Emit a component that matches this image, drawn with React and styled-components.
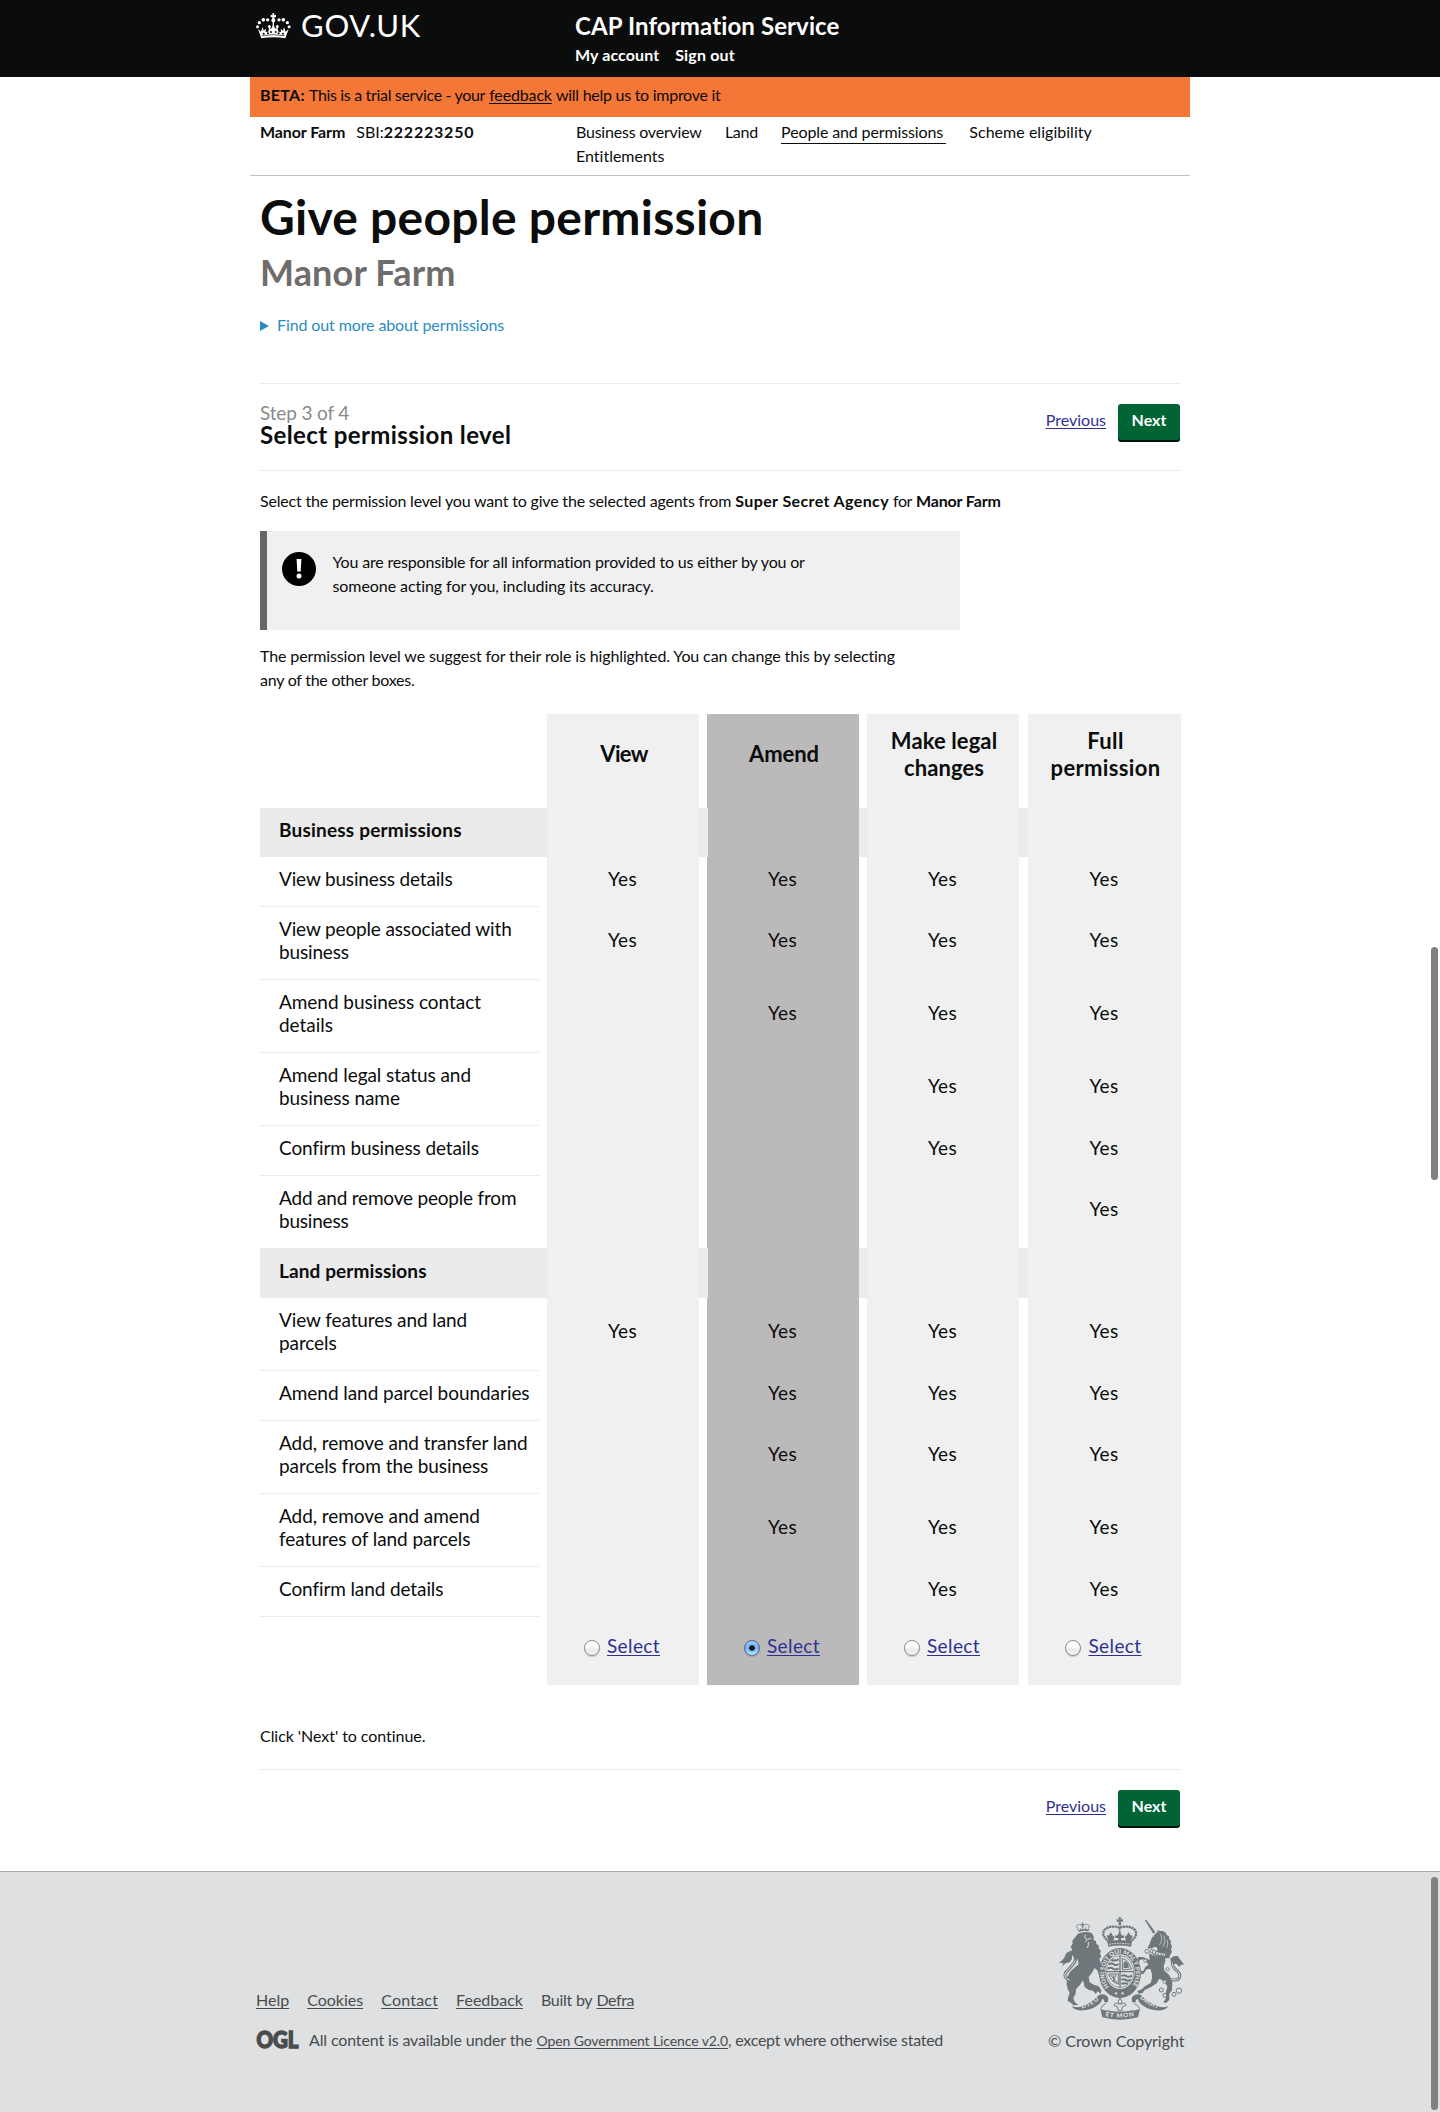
import React from 'react';
import styled, { createGlobalStyle, css } from 'styled-components';

const GlobalStyle = createGlobalStyle`
  * { box-sizing: border-box; }
  body {
    margin: 0;
    background: #fff;
    color: #0b0c0c;
    font: 400 16px/24px Lato, "Liberation Sans", sans-serif;
    font-variant-ligatures: none;
  }
  h1, h2, h3, p { margin: 0; padding: 0; }
`;

/* Inline run of text with its own tracking */
const T = styled.span`
  letter-spacing: ${(p) => p.$ls || 0}px;
  font-weight: ${(p) => (p.$bold ? 700 : 'inherit')};
  white-space: nowrap;
`;
const TextLink = styled.a`
  letter-spacing: ${(p) => p.$ls || 0}px;
  color: ${(p) => p.$color || 'inherit'};
  font-size: ${(p) => p.$size || 'inherit'};
  text-decoration: underline;
  text-decoration-thickness: 1px;
  text-underline-offset: 1.5px;
  text-decoration-skip-ink: none;
  white-space: nowrap;
`;

const Page = styled.div`
  position: relative;
  min-height: 2112px;
  overflow: hidden;
`;
const ScrollThumb = styled.div`
  position: absolute;
  right: 2px;
  top: ${(p) => p.$top}px;
  width: 7px;
  height: ${(p) => p.$height}px;
  border-radius: 4px;
  background: #808080;
`;

/* Header */
const Header = styled.header`
  height: 77px;
  padding-left: 255px;
  background: #0b0c0c;
  color: #fff;
  display: flex;
`;
const Brand = styled.div`
  width: 320px;
  padding-top: 11px;
  display: flex;
  align-items: flex-start;
  gap: 9px;
`;
const CrownSvg = styled.svg`margin-top: 2px;`;
const Wordmark = styled.span`
  font-size: 31px;
  line-height: 28px;
  letter-spacing: 0.75px;
`;
const HeaderText = styled.div`padding-top: 11px;`;
const ServiceName = styled.div`
  font-weight: 700;
  font-size: 24px;
  line-height: 30px;
  letter-spacing: 0.11px;
`;
const AccountLinks = styled.div`
  display: flex;
  gap: 16px;
  padding-top: 2px;
  font-weight: 700;
`;

const Wrapper = styled.div`
  width: 940px;
  margin-left: 250px;
`;
const BetaBar = styled.div`
  height: 40px;
  padding: 6px 10px;
  background: #f47738;
  white-space: nowrap;
`;
const BusinessNav = styled.nav`
  height: 59px;
  padding: 3px 10px 0;
  border-bottom: 1px solid #bfc1c3;
  display: flex;
`;
const BusinessId = styled.div`
  width: 316px;
  display: flex;
`;
const Sbi = styled.div`margin-left: 11px;`;
const NavLinks = styled.div`
  flex: 1;
  display: flex;
  flex-wrap: wrap;
  align-content: flex-start;
  column-gap: 23.3px;
`;
const NavLink = styled.a`
  height: 24px;
  letter-spacing: ${(p) => p.$ls}px;
  ${(p) => p.$current && css`
    padding-right: 3px;
    border-bottom: 1px solid #0b0c0c;
  `}
`;

/* Main column */
const Main = styled.main`padding: 0 10px;`;
const PageTitle = styled.h1`
  padding-top: 12px;
  font-size: 48px;
  line-height: 57px;
  letter-spacing: 0.25px;
`;
const SubTitle = styled.h2`
  padding-top: 5px;
  font-size: 36px;
  line-height: 44px;
  letter-spacing: 0.15px;
  color: #6f6c6c;
`;
const Disclosure = styled.div`
  margin: 19px 0 46px;
  display: flex;
  align-items: center;
  gap: 8px;
  color: #2b8cc4;
  letter-spacing: -0.11px;
`;
const Marker = styled.i`
  margin-top: 2px;
  border-left: 9px solid #2b8cc4;
  border-top: 5.5px solid transparent;
  border-bottom: 5.5px solid transparent;
`;
const StepBar = styled.div`
  display: flex;
  justify-content: space-between;
  align-items: flex-start;
  height: 88px;
  padding-top: 19px;
  border: solid #ececec;
  border-width: 1px 0;
`;
const StepCount = styled.div`
  font-size: 19px;
  line-height: 20px;
  letter-spacing: -0.15px;
  color: #8a8a8a;
`;
const StepTitle = styled.h3`
  font-size: 24px;
  line-height: 24px;
  letter-spacing: 0.38px;
`;
const Actions = styled.div`
  display: flex;
  gap: 12px;
  margin-top: ${(p) => p.$mt}px;
  justify-content: flex-end;
  line-height: 32px;
`;
const Button = styled.button`
  width: 62px;
  height: 36px;
  padding: 0 0 4px;
  border: 0;
  border-radius: 3px;
  background: #006435;
  box-shadow: 0 2px 0 #00120a;
  color: #fff;
  font: 700 16px/30px Lato, "Liberation Sans", sans-serif;
`;
const Paragraph = styled.p`
  padding-top: ${(p) => p.$pt}px;
  white-space: nowrap;
`;
const Alert = styled.div`
  width: 700px;
  height: 99px;
  margin-top: 18px;
  padding: 19px 0 0 15px;
  display: flex;
  gap: 16.5px;
  background: #f0f0f0;
  border-left: 7px solid #666;
`;
const AlertIcon = styled.svg`margin-top: 2px; flex: none;`;

/* Permission table */
const Table = styled.div`
  width: 921px;
  margin-top: 22px;
  font-size: 19px;
  line-height: 23px;
`;
const Row = styled.div`
  display: grid;
  grid-template-columns: 287px 160px 160px 161px 153px;
  height: ${(p) => p.$h}px;
  background: ${(p) => (p.$band ? '#ebebeb' : 'transparent')};
`;
const Label = styled.div`
  margin-right: 8px;
  padding: ${(p) => p.$pt}px ${(p) => p.$pr}px 0 19px;
  border-bottom: ${(p) => (p.$line ? '1px solid #ececec' : '0')};
  font-weight: ${(p) => (p.$bold ? 700 : 400)};
  letter-spacing: ${(p) => p.$ls || 0}px;
`;
const Cell = styled.div`
  margin-right: ${(p) => [8, 8, 9, 0][p.$col]}px;
  margin-left: ${(p) => (p.$band && p.$col < 3 ? 1 : 0)}px;
  padding-top: ${(p) => p.$pt || 0}px;
  padding-right: 1px;
  background: ${(p) => (p.$col === 1 ? '#bbb9b9' : '#f0f0f0')};
  display: flex;
  justify-content: center;
  align-items: flex-start;
  text-align: center;
  letter-spacing: 0.28px;
`;
const ColumnTitle = styled.div`
  font-weight: 700;
  font-size: 22px;
  line-height: 27px;
  letter-spacing: ${(p) => p.$ls}px;
  padding: ${(p) => (p.$two ? 13 : 26)}px 17px 0 20px;
`;
const Option = styled.label`
  display: flex;
  gap: 7px;
  padding-right: 1px;
`;
const RadioDot = styled.span`
  width: 16px;
  height: 16px;
  margin-top: 6px;
  border-radius: 50%;
  border: 1px solid ${(p) => (p.$on ? '#47659b' : '#8b8b8b')};
  background: ${(p) => (p.$on
    ? 'radial-gradient(circle, #06121f 0 2.4px, transparent 3.2px), linear-gradient(#a9cdf5, #6db3f2 50%, #c4f0ff)'
    : 'linear-gradient(#fff 40%, #eaeaea 60%, #f6f6f6)')};
  background-origin: border-box;
  box-shadow: 0 1px 1px rgba(0, 0, 0, 0.18);
`;

const Continue = styled.p`
  padding: 39px 0 21px;
  border-bottom: 1px solid #ececec;
  letter-spacing: -0.05px;
`;

/* Footer */
const Footer = styled.footer`
  height: 241px;
  margin-top: 45px;
  padding: 45px 256px 0;
  background: #dee0e2;
  border-top: 1px solid #a1acb2;
  color: #494c4e;
  display: flex;
  justify-content: space-between;
`;
const FooterLinks = styled.div`
  display: flex;
  gap: 18px;
  padding-top: 71px;
`;
const Licence = styled.div`
  display: flex;
  gap: 10px;
  margin-top: 16px;
`;
const OglSvg = styled.svg`
  margin: -4px 0;
  overflow: visible;
`;
const Crown = styled.div`
  width: 136px;
  flex: none;
`;
const CrestSvg = styled.svg`
  display: block;
  margin: 0 0 9px 11px;
`;

const COLUMNS = [
  { title: ['View'], ls: -0.7 },
  { title: ['Amend'], ls: -0.08 },
  { title: ['Make legal', 'changes'], ls: 0.1 },
  { title: ['Full', 'permission'], ls: 0.35 },
];
const ROWS = [
  { band: true, label: 'Business permissions', h: 49, ls: 0.2 },
  { label: 'View business details', h: 50, yes: [1, 1, 1, 1], ls: -0.16 },
  { label: 'View people associated with business', h: 73, yes: [1, 1, 1, 1], ls: -0.15 },
  { label: 'Amend business contact details', h: 73, yes: [0, 1, 1, 1], ls: -0.04 },
  { label: 'Amend legal status and business name', h: 73, yes: [0, 0, 1, 1], ls: -0.06 },
  { label: 'Confirm business details', h: 50, yes: [0, 0, 1, 1], ls: -0.11 },
  { label: 'Add and remove people from business', h: 72, yes: [0, 0, 0, 1], ls: -0.2, last: true },
  { band: true, label: 'Land permissions', h: 50, pt: 11, ls: 0.11 },
  { label: 'View features and land parcels', h: 73, pr: 40, yes: [1, 1, 1, 1], ls: -0.1 },
  { label: 'Amend land parcel boundaries', h: 50, yes: [0, 1, 1, 1], ls: -0.05 },
  { label: 'Add, remove and transfer land parcels from the business', h: 73, yes: [0, 1, 1, 1], ls: -0.07 },
  { label: 'Add, remove and amend features of land parcels', h: 73, yes: [0, 1, 1, 1], ls: -0.06 },
  { label: 'Confirm land details', h: 50, yes: [0, 0, 1, 1], ls: -0.11 },
];

const INK = '#6f777b';

function GovCrown() {
  const dots = [[50.5, 81, 4.5], [56, 69, 5], [68, 60.5, 5.5], [81, 60.5, 5]];
  return (
    <CrownSvg width="37" height="27" viewBox="43 40 111 81" fill="#fff">
      {dots.map(([x, y, r]) => (
        <g key={x}>
          <circle cx={x} cy={y} r={r} />
          <circle cx={196 - x} cy={y} r={r} />
        </g>
      ))}
      <path d="M94.500 41h7l-1.500 6 6-2v8l-5-1 .5 5a6 6 0 1 1-7 0l.5-5-5 1v-8l6 2z" />
      <path d="M96 66h4v18h-4z" />
      <path d="M52 88l9 8 5-14 3 11 7-6-1 10 8-1 2-9-4-7 5-5 5 5-3 8 6-4 4-12 4 12 6 4-3-8 5-5 5 5-4 7 2 9 8 1-1-10 7 6 3-11 5 14 9-8-10 28q-36-6-72 0z" />
      <path d="M64 108q34-6 68 0" stroke="#0b0c0c" strokeWidth="2" fill="none" />
      <g fill="#0b0c0c">
        <circle cx="82" cy="101" r="3" /><circle cx="114" cy="101" r="3" />
        <circle cx="91" cy="97" r="3" /><circle cx="105" cy="97" r="3" />
        <circle cx="69" cy="102" r="3" /><circle cx="127" cy="102" r="3" />
      </g>
    </CrownSvg>
  );
}

function Warning() {
  return (
    <AlertIcon width="34" height="34" viewBox="0 0 34 34">
      <circle cx="17" cy="17" r="17" />
      <path d="M14.600 7h4.800l-.7 12.500h-3.400z" fill="#fff" />
      <circle cx="17" cy="24" r="2.500" fill="#fff" />
    </AlertIcon>
  );
}

function OglMark() {
  return (
    <OglSvg width="43" height="32" viewBox="0 -4 43 32">
      <text x="0.500" y="20" fontFamily="Lato" fontWeight="900" fontSize="22" textLength="42" lengthAdjust="spacingAndGlyphs" fill="#494c4e" stroke="#494c4e" strokeWidth="1.400">OGL</text>
    </OglSvg>
  );
}

function Crest() {
  return (
    <CrestSvg width="125" height="103" viewBox="87 50 375 307" fill={INK}>
      <defs>
        <path id="garter" d="M237 259a47 59 0 1 1 68-2" />
        <path id="dieu" d="M156 324q32-8 58-33" />
        <path id="droit" d="M329 292q25 25 62 33" />
        <path id="mon" d="M226 346q42 10 90 0" />
      </defs>
      {/* lion */}
      <path d="M144 99q16-8 40-3l5 6 3 9-3 5 9 6 1 8 8 5-1 8 7 8-3 7 4 10-6 6 3 10 4 15-1 22 6 14-8-5-4-3-5-17-9-8-9 16-9 11 3 16 14 8 12 3 9 12-2 11-9-7-6 8-8-10-13-2-12-9-5-20-10 15-11 12-1 13-7 13 4 12 11 9-15 1-10-10-7-2 1-10 5-15-6-12-3-14 1-21 9-17 16-14 10-8-3-15-10-4-3-8-6-8 2-10-4-8 6-9-1-9z" />
      <path d="M166 102l-2 9 8 5 12-3M166 124l5-7M175 124v10l-4 8" fill="none" stroke="#dee0e2" strokeWidth="3" />
      <path d="M146 92q16-7 30-3" fill="none" stroke={INK} strokeWidth="5" />
      <path d="M145 90q-11-19 3-18 9 0 10 8 2-8 11-9 13 0 6 17" fill="none" stroke={INK} strokeWidth="3" strokeDasharray="5 1.500" />
      <path d="M158 65v24M153 71h10M150 82l2 7M167 80l-1 8" stroke={INK} strokeWidth="2.500" />
      <path d="M119 238q-20-6-12-23 20-19 29-35 3-17-14-25" fill="none" stroke={INK} strokeWidth="9" strokeLinecap="round" />
      <path d="M119 238q-20-6-12-23 20-19 29-35" fill="none" stroke="#dee0e2" strokeWidth="3" />
      <path d="M126 154q-17-3-20 10-4 13-19 22l13 1-4 10 12-10 11-2 7-10z" />
      {/* unicorn */}
      <path d="M344 57l5 1 27 36-6 5z" />
      <path d="M384 92l-3-5 9 4 8 0 9 5 3 7 7 4 0 7 6 7-1 8 4 8-3 8 3 9-6 9-2 10-12 0q-22-2-38-13l7-7 8-5-3-9-10 1-6 4-4-3-3 4-4-4 6-12 5-14 6-10 9-8z" />
      <path d="M367 104l6 4M392 100q8 18-4 34M403 105q5 15-3 33M412 118q4 12-2 24" stroke="#dee0e2" strokeWidth="2" fill="none" />
      <path d="M365 145q19 13 42 13l-1 9q-25 0-47-13z" fill="#dee0e2" stroke={INK} strokeWidth="2.500" />
      <path d="M369 149l-2 8M377 153l-1 8M385 156l-1 8M393 158v8M400 159v8" stroke={INK} strokeWidth="3" />
      <path d="M357 158q24 13 48 12l1 12-5 14 2 14 14 12 10 20-1 24-8 14 0 18-10 9-8-2 8-12 0-20 4-15-8-15-16-9-8 14-18 12-18 8-6 9-12 2-4-8 13-5 10-9 17-10 4-14 0-12-5-16-11 1-9 13-8 1-4-8 5-2 6 1 6-12 9-7-8-13-11-3-7 3-3 9-6-6 5-13 14 0 20 9z" />
      <path d="M423 236q20 6 26-6 3-13-13-24-15-15-5-29l7-6" fill="none" stroke={INK} strokeWidth="9" strokeLinecap="round" />
      <path d="M423 236q20 6 26-6 3-13-13-24-15-15-5-29" fill="none" stroke="#dee0e2" strokeWidth="3" />
      <path d="M420 178q4-14 23-12 8 12 19 25l-11 3-3 5-8-9-10-1-7-9z" />
      <g fill="none" stroke={INK} strokeWidth="3">
        <circle cx="394" cy="268" r="6" /><circle cx="405" cy="284" r="6" /><circle cx="419" cy="268" r="5" />
        <circle cx="432" cy="281" r="6" /><circle cx="447" cy="270" r="8" />
      </g>
      <g fill="#dee0e2" stroke={INK} strokeWidth="2.500">
        <circle cx="404" cy="243" r="5" /><circle cx="413" cy="206" r="5" />
        <circle cx="351" cy="152" r="6" /><circle cx="346" cy="180" r="5" />
      </g>
      {/* crown */}
      <path d="M265 50h9l-2 7 7-2v9l-7-2 2 12h-9l2-12-7 2v-9l7 2z" />
      <path d="M238 124q-26-19-15-36 16-16 46-7 30-9 46 7 11 17-15 36" fill="none" stroke={INK} strokeWidth="7" strokeDasharray="7 1.500" />
      <path d="M269 79v34" stroke={INK} strokeWidth="5" strokeDasharray="5 1.500" />
      <path d="M254 104q8 4 11-4l4-6 4 6q3 8 11 4l-3 8h-8v9h-8v-9h-8zM229 104q9 3 10-5l4-4 3 6q2 7 8 7l-5 14h-12zM309 104q-9 3-10-5l-4-4-3 6q-2 7-8 7l5 14h12z" />
      <path d="M232 123q37-10 74 0l-3 15q-34-7-68 0z" />
      <path d="M237 131q32-6 64 0" fill="none" stroke="#dee0e2" strokeWidth="3" strokeDasharray="5 3" />
      {/* garter and shield */}
      <ellipse cx="270" cy="217" rx="63" ry="75" />
      <ellipse cx="270" cy="213" rx="44" ry="52" fill="#dee0e2" />
      <ellipse cx="270" cy="213" rx="41" ry="48" fill="none" stroke={INK} strokeWidth="2" />
      <path d="M270 165v96M229 213h82" stroke={INK} strokeWidth="4" />
      <g stroke={INK} strokeWidth="6" fill="none">
        <path d="M244 178q10 4 22-2M236 191q10-5 15 0t15-1M233 204q10-5 16 0t17-1M274 226q9-5 15 0t17-1M274 238q9-5 14 0t14-1M274 250q8-4 20-1" />
      </g>
      <path d="M277 173q20 6 27 32l-27 3z" fill="none" stroke={INK} strokeWidth="3" />
      <path d="M281 203q-3-16 4-23l10 9 2 12z" />
      <path d="M236 220h29v31q-22-8-29-31zM241 222l21 25M249 222l4 24M258 222l-9 22" fill="none" stroke={INK} strokeWidth="3" />
      <text fontFamily="Lato" fontWeight="900" fontSize="18" fill="#dee0e2">
        <textPath href="#garter" textLength="250">HONI SOIT QUI MAL Y PENSE</textPath>
      </text>
      <circle cx="258" cy="278" r="3.500" fill="#dee0e2" /><circle cx="278" cy="278" r="3.500" fill="#dee0e2" />
      {/* scroll */}
      <path d="M125 316q20 8 38-2 24-10 45-32 14-4 25 6 5 12-3 18l-8-3q2-8-6-7-1 10-18 21-18 14-52 12-13-2-21-13z" />
      <path d="M415 316q-20 8-38-2-24-10-45-32-14-4-25 6-5 12 3 18l8-3q-2-8 6-7 1 10 18 21 18 14 52 12 13-2 21-13z" />
      <path d="M211 323q9 8 19 6 40 8 80 0 12 2 20-6l-6 27q-54 14-107 0z" />
      <path d="M213 323q4-10 14-14M328 323q-4-10-14-14" fill="none" stroke={INK} strokeWidth="3" />
      <path d="M270 292q10 10 2 19 14-9 16 3l-7 3-5 3v10h-12v-10l-6-3-6-3q3-12 16-3-8-9 2-19z" fill="#dee0e2" stroke={INK} strokeWidth="3" />
      <g fontFamily="Lato" fontWeight="900" fontSize="19" fill="#dee0e2">
        <text><textPath href="#dieu" textLength="58">DIEU</textPath></text>
        <text><textPath href="#droit" textLength="64">DROIT</textPath></text>
        <text><textPath href="#mon" textLength="87">ET MON</textPath></text>
      </g>
    </CrestSvg>
  );
}

function NavActions({ mt }) {
  return (
    <Actions $mt={mt}>
      <TextLink $color="#2e3191">Previous</TextLink>
      <Button>Next</Button>
    </Actions>
  );
}

function PermissionTable() {
  return (
    <Table>
      <Row $h={94}>
        <div />
        {COLUMNS.map((c, i) => (
          <Cell key={i} $col={i}>
            <ColumnTitle $ls={c.ls} $two={c.title.length > 1}>
              {c.title.map((line) => <div key={line}>{line}</div>)}
            </ColumnTitle>
          </Cell>
        ))}
      </Row>
      {ROWS.map((r) => (
        <Row key={r.label} $h={r.h} $band={r.band}>
          <Label $bold={r.band} $ls={r.ls} $pt={r.pt || 10} $pr={r.pr || 3} $line={!r.band && !r.last}>
            {r.label}
          </Label>
          {COLUMNS.map((c, i) => (
            <Cell key={i} $col={i} $band={r.band} $pt={r.h > 60 ? 21 : 10}>
              {r.yes && r.yes[i] ? 'Yes' : null}
            </Cell>
          ))}
        </Row>
      ))}
      <Row $h={68}>
        <div />
        {COLUMNS.map((c, i) => (
          <Cell key={i} $col={i} $pt={17}>
            <Option>
              <RadioDot $on={i === 1} />
              <TextLink $color="#2e3191" $ls={0.4}>Select</TextLink>
            </Option>
          </Cell>
        ))}
      </Row>
    </Table>
  );
}

export default function App() {
  return (
    <Page>
      <GlobalStyle />
      <Header>
        <Brand>
          <GovCrown />
          <Wordmark>GOV.UK</Wordmark>
        </Brand>
        <HeaderText>
          <ServiceName>CAP Information Service</ServiceName>
          <AccountLinks>
            <T $ls={0.1}>My account</T>
            <T $ls={0.15}>Sign out</T>
          </AccountLinks>
        </HeaderText>
      </Header>
      <Wrapper>
        <BetaBar>
          <T $bold $ls={0.27}>BETA:</T>{' '}
          <T $ls={-0.33}>This is a trial service - your</T>{' '}
          <TextLink $ls={-0.15}>feedback</TextLink>{' '}
          <T $ls={-0.27}>will help us to improve it</T>
        </BetaBar>
        <BusinessNav>
          <BusinessId>
            <T $bold $ls={-0.1}>Manor Farm</T>
            <Sbi><T>SBI:</T><T $bold $ls={0.78}>222223250</T></Sbi>
          </BusinessId>
          <NavLinks>
            <NavLink $ls={-0.22}>Business overview</NavLink>
            <NavLink $ls={-0.3}>Land</NavLink>
            <NavLink $ls={-0.13} $current>People and permissions</NavLink>
            <NavLink $ls={0.03}>Scheme eligibility</NavLink>
            <NavLink $ls={0}>Entitlements</NavLink>
          </NavLinks>
        </BusinessNav>
        <Main>
          <PageTitle>Give people permission</PageTitle>
          <SubTitle>Manor Farm</SubTitle>
          <Disclosure><Marker />Find out more about permissions</Disclosure>
          <StepBar>
            <div>
              <StepCount>Step 3 of 4</StepCount>
              <StepTitle>Select permission level</StepTitle>
            </div>
            <NavActions mt={1} />
          </StepBar>
          <Paragraph $pt={18}>
            <T $ls={-0.18}>Select the permission level you want to give the selected agents from</T>{' '}
            <T $bold $ls={0.38}>Super Secret Agency</T>{' '}
            <T $ls={-0.5}>for</T>{' '}
            <T $bold $ls={-0.15}>Manor Farm</T>
          </Paragraph>
          <Alert>
            <Warning />
            <div>
              <T $ls={-0.17}>You are responsible for all information provided to us either by you or</T><br />
              <T $ls={-0.07}>someone acting for you, including its accuracy.</T>
            </div>
          </Alert>
          <Paragraph $pt={14}>
            <T $ls={-0.12}>The permission level we suggest for their role is highlighted. You can change this by selecting</T><br />
            <T $ls={-0.25}>any of the other boxes.</T>
          </Paragraph>
          <PermissionTable />
          <Continue>Click &#39;Next&#39; to continue.</Continue>
          <NavActions mt={20} />
        </Main>
      </Wrapper>
      <Footer>
        <div>
          <FooterLinks>
            <TextLink>Help</TextLink>
            <TextLink>Cookies</TextLink>
            <TextLink $ls={0.2}>Contact</TextLink>
            <TextLink>Feedback</TextLink>
            <span><T $ls={-0.27}>Built by</T> <TextLink $ls={-0.45}>Defra</TextLink></span>
          </FooterLinks>
          <Licence>
            <OglMark />
            <div>
              <T $ls={-0.14}>All content is available under the</T>{' '}
              <TextLink $size="14px" $ls={-0.1}>Open Government Licence v2.0</TextLink>
              <T $ls={-0.27}>, except where otherwise stated</T>
            </div>
          </Licence>
        </div>
        <Crown>
          <Crest />
          <T $ls={-0.05}>© Crown Copyright</T>
        </Crown>
      </Footer>
      <ScrollThumb $top={947} $height={233} />
      <ScrollThumb $top={1877} $height={233} />
    </Page>
  );
}
